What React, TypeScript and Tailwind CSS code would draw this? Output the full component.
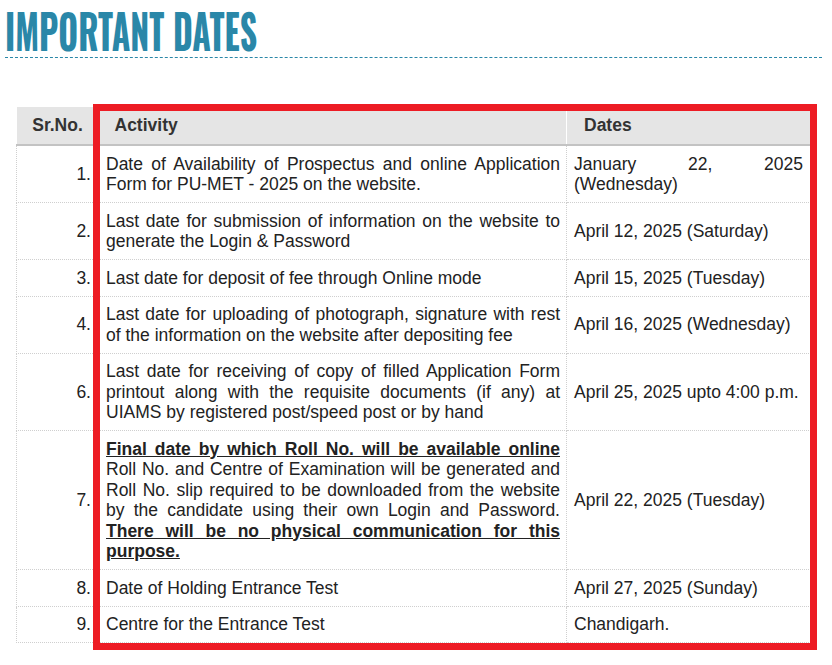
const rows: { no: string; activity: React.ReactNode; date: React.ReactNode }[] = [
  {
    no: '1.',
    activity: 'Date of Availability of Prospectus and online Application Form for PU-MET - 2025 on the website.',
    date: 'January 22, 2025 (Wednesday)',
  },
  {
    no: '2.',
    activity: 'Last date for submission of information on the website to generate the Login & Password',
    date: 'April 12, 2025 (Saturday)',
  },
  { no: '3.', activity: 'Last date for deposit of fee through Online mode', date: 'April 15, 2025 (Tuesday)' },
  {
    no: '4.',
    activity: 'Last date for uploading of photograph, signature with rest of the information on the website after depositing fee',
    date: 'April 16, 2025 (Wednesday)',
  },
  {
    no: '6.',
    activity:
      'Last date for receiving of copy of filled Application Form printout along with the requisite documents (if any) at UIAMS by registered post/speed post or by hand',
    date: 'April 25, 2025 upto 4:00 p.m.',
  },
  {
    no: '7.',
    activity: (
      <>
        <b className="underline">Final date by which Roll No. will be available online</b> Roll No. and Centre of
        Examination will be generated and Roll No. slip required to be downloaded from the website by the candidate
        using their own Login and Password.{' '}
        <b className="underline">There will be no physical communication for this purpose.</b>
      </>
    ),
    date: 'April 22, 2025 (Tuesday)',
  },
  { no: '8.', activity: 'Date of Holding Entrance Test', date: 'April 27, 2025 (Sunday)' },
  { no: '9.', activity: 'Centre for the Entrance Test', date: 'Chandigarh.' },
];

export default function App() {
  return (
    <div className="w-[832px] h-[665px] bg-white overflow-hidden font-['Liberation_Sans',Arial,sans-serif]">
      <div className="pl-[5px] pr-[10px] pt-[4px]">
        <h1 className="h-[54px] border-b border-dashed border-[#2a87a8]">
          <span className="inline-block origin-left scale-x-[0.72] text-[47px] leading-[52px] font-bold text-[#2a87a8] font-['Oswald','Liberation_Sans_Narrow','DejaVu_Sans_Condensed',sans-serif] whitespace-nowrap">
            IMPORTANT DATES
          </span>
        </h1>
      </div>

      <div className="relative ml-[16px] mt-[49px] w-[794px]">
        <table className="w-full border-collapse table-fixed text-[17.5px] leading-[20.5px] text-[#222]">
          <colgroup>
            <col className="w-[82px]" />
            <col className="w-[468px]" />
            <col className="w-[244px]" />
          </colgroup>
          <thead>
            <tr className="bg-[#e5e5e5] border-b-2 border-[#c3c3c3] text-[#333]">
              <th className="h-[38px] text-center font-bold">Sr.No.</th>
              <th className="h-[38px] text-left pl-[16px] font-bold border-r border-white">Activity</th>
              <th className="h-[38px] text-left pl-[17px] font-bold">Dates</th>
            </tr>
          </thead>
          <tbody>
            {rows.map((r) => (
              <tr key={r.no}>
                <td className="border border-dotted border-[#cfcfcf] py-[7.5px] pr-[7px] text-right align-middle">
                  {r.no}
                </td>
                <td className="border border-dotted border-[#cfcfcf] py-[7.5px] pl-[7px] pr-[6px] text-justify align-middle">
                  {r.activity}
                </td>
                <td className="border border-dotted border-[#cfcfcf] py-[7.5px] px-[7px] text-justify align-middle">
                  {r.date}
                </td>
              </tr>
            ))}
          </tbody>
        </table>
        <div className="absolute left-[77px] -top-[3px] -right-[7px] -bottom-[7px] border-[7px] border-[#ed1c24] pointer-events-none" />
      </div>
    </div>
  );
}
